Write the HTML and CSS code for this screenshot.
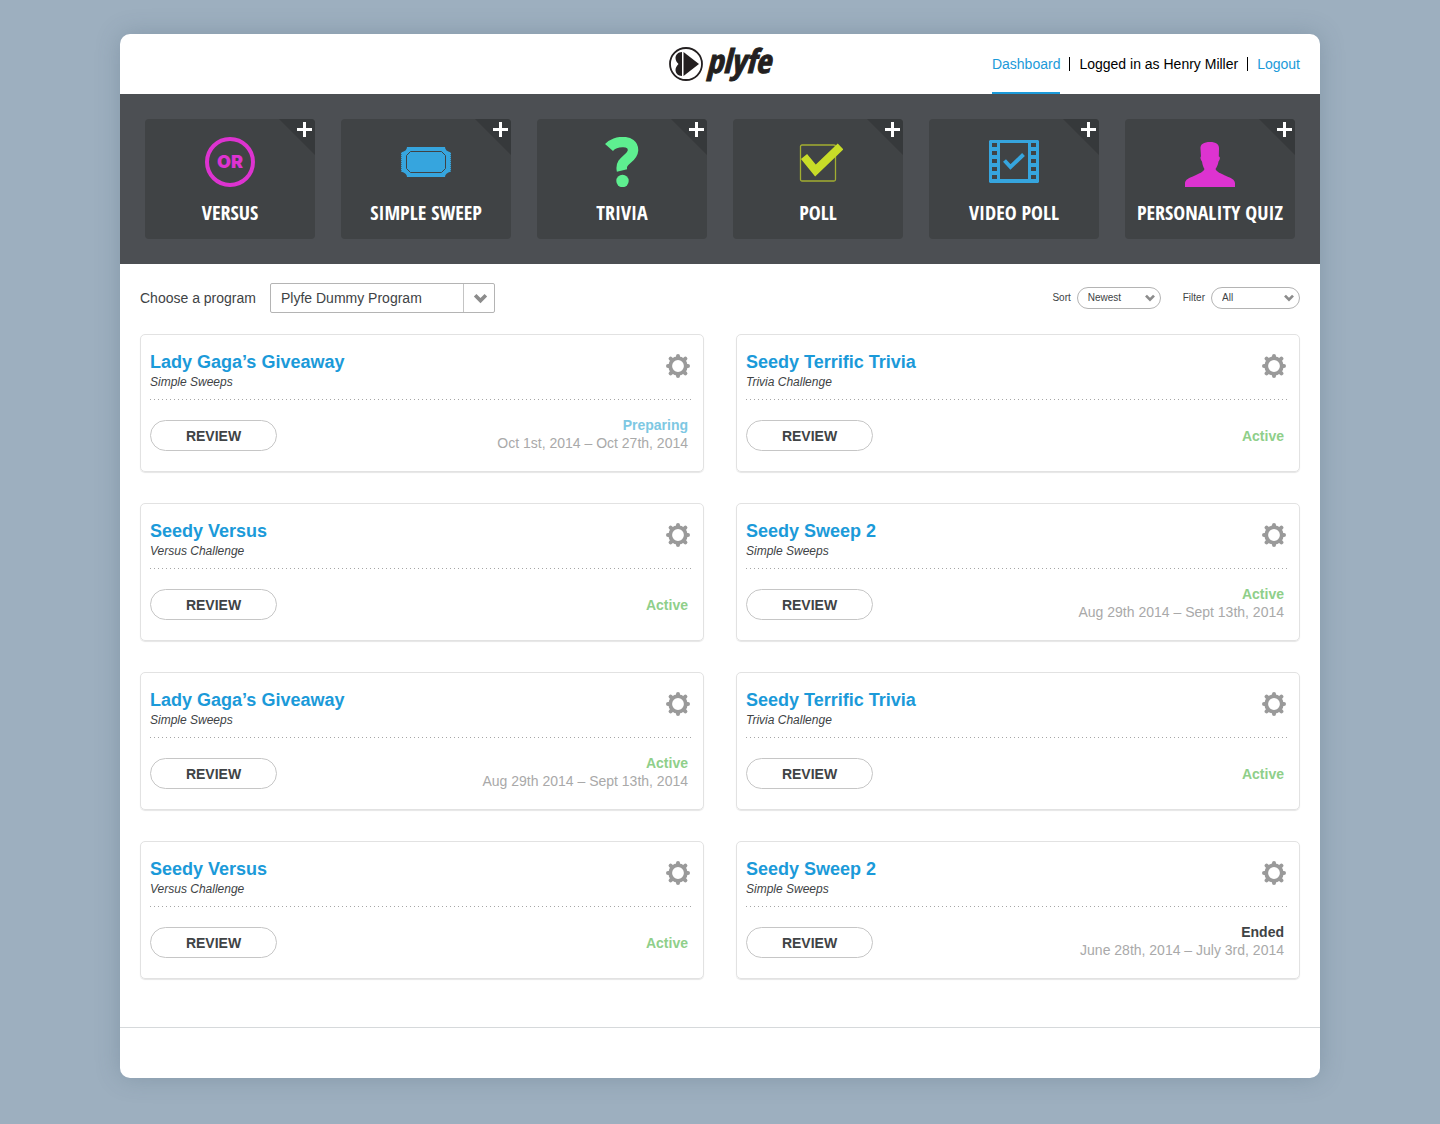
FILE: index.html
```html
<!DOCTYPE html>
<html lang="en">
<head>
<meta charset="utf-8">
<title>Plyfe Dashboard</title>
<meta name="viewport" content="width=device-width, initial-scale=1">
<link rel="stylesheet" href="styles.css">
</head>
<body>
<svg class="sprite" aria-hidden="true">
  <symbol id="corner" viewBox="0 0 36 36">
    <path d="M0 0H36V36Z" fill="#36393b"/>
    <path d="M25.500 3V18M18 10.500H33" stroke="#fff" stroke-width="3"/>
  </symbol>
  <symbol id="chevron" viewBox="0 0 14 10">
    <path d="M2 2L7 7L12 2" fill="none" stroke="#8c8c8c" stroke-width="3.400"/>
  </symbol>
  <symbol id="gear" viewBox="-12 -12 24 24">
    <g fill="none" stroke="#9a9a9a" stroke-linecap="round">
      <circle r="7.800" stroke-width="3.800"/>
      <path d="M0 -8V-10M0 8V10M-8 0H-10M8 0H10" stroke-width="4"/>
      <path d="M6 -6L7.400 -7.400M6 6L7.400 7.400M-6 6L-7.400 7.400M-6 -6L-7.400 -7.400" stroke-width="4"/>
    </g>
  </symbol>
</svg>

<div class="panel">
  <header class="header">
    <a class="logo" href="#" aria-label="plyfe">
      <svg class="logo-mark" viewBox="0 0 34 34" aria-hidden="true">
        <circle cx="17" cy="17" r="16" fill="none" stroke="#231f20" stroke-width="1.800"/>
        <path d="M14.500 5L30 17L14.500 29Z" fill="#231f20"/>
        <path d="M13 5V29C9 29 6.500 26 6.500 23C6.500 20.500 8 18.500 9.500 17C8 15.500 6.500 13.500 6.500 11C6.500 8 9 5 13 5Z" fill="#231f20"/>
      </svg>
      <span class="logo-word">plyfe</span>
    </a>
    <nav class="nav">
      <a class="nav-item nav-link current" href="#">Dashboard</a>
      <span class="nav-item">Logged in as Henry Miller</span>
      <a class="nav-item nav-link" href="#">Logout</a>
    </nav>
  </header>

  <section class="types">
    <button class="tile" type="button">
      <svg class="tile-corner"><use href="#corner"/></svg>
      <svg class="tile-icon" viewBox="0 0 50 50">
        <circle cx="25" cy="25" r="23" fill="none" stroke="#dd33d0" stroke-width="4"/>
        <text class="or" x="25" y="31" text-anchor="middle">OR</text>
      </svg>
      <span class="tile-label">VERSUS</span>
    </button>
    <button class="tile" type="button">
      <svg class="tile-corner"><use href="#corner"/></svg>
      <svg class="tile-icon" viewBox="0 0 50 50">
        <path d="M6 10H44Q44 14 50 15.500V34.500Q44 36 44 40H6Q6 36 0 34.500V15.500Q6 14 6 10Z" fill="#36a5de"/>
        <path d="M9.500 14.500H40.500L44.500 18.500V31.500L40.500 35.500H9.500L5.500 31.500V18.500Z" fill="none" stroke="#404345"/>
        <path d="M0 15V35M50 15V35" stroke="#404345" stroke-dasharray="1 1"/>
      </svg>
      <span class="tile-label">SIMPLE SWEEP</span>
    </button>
    <button class="tile" type="button">
      <svg class="tile-corner"><use href="#corner"/></svg>
      <svg class="tile-icon" viewBox="0 0 50 50">
        <path d="M12 10.500C18 3.500 36.500 2 36 13.500C35.500 22 22.500 23 25 33.500" fill="none" stroke="#5eef90" stroke-width="10.500"/>
        <circle cx="25.500" cy="44" r="6.200" fill="#5eef90"/>
      </svg>
      <span class="tile-label">TRIVIA</span>
    </button>
    <button class="tile" type="button">
      <svg class="tile-corner"><use href="#corner"/></svg>
      <svg class="tile-icon" viewBox="0 0 50 50">
        <rect x="7.500" y="8" width="35" height="36" rx="1.500" fill="none" stroke="#a2ae31" stroke-width="1.300"/>
        <path d="M11 19.500L22.500 33.500L47.500 9.500" fill="none" stroke="#c8dc28" stroke-width="8"/>
      </svg>
      <span class="tile-label">POLL</span>
    </button>
    <button class="tile" type="button">
      <svg class="tile-corner"><use href="#corner"/></svg>
      <svg class="tile-icon" viewBox="0 0 50 50">
        <path fill="#36a5de" fill-rule="evenodd" d="M1 3H49L50 4V45L49 46H1L0 45V4ZM11 6V42H39V6ZM3 6V10H8V6ZM3 14V18H8V14ZM3 22V26H8V22ZM3 30V34H8V30ZM3 38V42H8V38ZM42 6V10H47V6ZM42 14V18H47V14ZM42 22V26H47V22ZM42 30V34H47V30ZM42 38V42H47V38Z"/>
        <path d="M15.500 23.500L21.500 30L34.500 17.500" fill="none" stroke="#36a5de" stroke-width="4"/>
      </svg>
      <span class="tile-label">VIDEO POLL</span>
    </button>
    <button class="tile" type="button">
      <svg class="tile-corner"><use href="#corner"/></svg>
      <svg class="tile-icon" viewBox="0 0 50 50">
        <path fill="#dd33d0" d="M15.500 12C15 7 19 5 25 5C31 5 34.500 7.500 34 12L33.800 19.500C35.500 19.500 35 23 33.500 24.500C33 28 31.500 30.500 30.500 32C31.500 35 36 36.500 40 38.500C46 41 50 42.500 50 46.500V50H0V46.500C0 42.500 4 41 10 38.500C14 36.500 18.500 35 19.500 32C18.500 30.500 17.500 28 17 24.500C15.500 23 15 19.500 16 19.500Z"/>
      </svg>
      <span class="tile-label">PERSONALITY QUIZ</span>
    </button>
  </section>

  <form class="toolbar">
    <label class="field-label" for="program">Choose a program</label>
    <span class="select-box program">
      <select id="program"><option>Plyfe Dummy Program</option></select>
      <svg class="chevron"><use href="#chevron"/></svg>
    </span>
    <span class="refine">
      <label for="sort">Sort</label>
      <span class="select-box pill">
        <select id="sort"><option>Newest</option></select>
        <svg class="chevron"><use href="#chevron"/></svg>
      </span>
    </span>
    <span class="refine">
      <label for="filter">Filter</label>
      <span class="select-box pill">
        <select id="filter"><option>All</option></select>
        <svg class="chevron"><use href="#chevron"/></svg>
      </span>
    </span>
  </form>

  <main class="cards">
    <article class="card">
      <div class="card-head">
        <div><h2><a href="#">Lady Gaga’s Giveaway</a></h2><p class="kind">Simple Sweeps</p></div>
        <button class="gear" type="button" aria-label="Settings"><svg><use href="#gear"/></svg></button>
      </div>
      <div class="card-body">
        <button class="review" type="button">REVIEW</button>
        <div class="state"><strong class="preparing">Preparing</strong><span>Oct 1st, 2014 – Oct 27th, 2014</span></div>
      </div>
    </article>
    <article class="card">
      <div class="card-head">
        <div><h2><a href="#">Seedy Terrific Trivia</a></h2><p class="kind">Trivia Challenge</p></div>
        <button class="gear" type="button" aria-label="Settings"><svg><use href="#gear"/></svg></button>
      </div>
      <div class="card-body">
        <button class="review" type="button">REVIEW</button>
        <div class="state"><strong class="active">Active</strong></div>
      </div>
    </article>
    <article class="card">
      <div class="card-head">
        <div><h2><a href="#">Seedy Versus</a></h2><p class="kind">Versus Challenge</p></div>
        <button class="gear" type="button" aria-label="Settings"><svg><use href="#gear"/></svg></button>
      </div>
      <div class="card-body">
        <button class="review" type="button">REVIEW</button>
        <div class="state"><strong class="active">Active</strong></div>
      </div>
    </article>
    <article class="card">
      <div class="card-head">
        <div><h2><a href="#">Seedy Sweep 2</a></h2><p class="kind">Simple Sweeps</p></div>
        <button class="gear" type="button" aria-label="Settings"><svg><use href="#gear"/></svg></button>
      </div>
      <div class="card-body">
        <button class="review" type="button">REVIEW</button>
        <div class="state"><strong class="active">Active</strong><span>Aug 29th 2014 – Sept 13th, 2014</span></div>
      </div>
    </article>
    <article class="card">
      <div class="card-head">
        <div><h2><a href="#">Lady Gaga’s Giveaway</a></h2><p class="kind">Simple Sweeps</p></div>
        <button class="gear" type="button" aria-label="Settings"><svg><use href="#gear"/></svg></button>
      </div>
      <div class="card-body">
        <button class="review" type="button">REVIEW</button>
        <div class="state"><strong class="active">Active</strong><span>Aug 29th 2014 – Sept 13th, 2014</span></div>
      </div>
    </article>
    <article class="card">
      <div class="card-head">
        <div><h2><a href="#">Seedy Terrific Trivia</a></h2><p class="kind">Trivia Challenge</p></div>
        <button class="gear" type="button" aria-label="Settings"><svg><use href="#gear"/></svg></button>
      </div>
      <div class="card-body">
        <button class="review" type="button">REVIEW</button>
        <div class="state"><strong class="active">Active</strong></div>
      </div>
    </article>
    <article class="card">
      <div class="card-head">
        <div><h2><a href="#">Seedy Versus</a></h2><p class="kind">Versus Challenge</p></div>
        <button class="gear" type="button" aria-label="Settings"><svg><use href="#gear"/></svg></button>
      </div>
      <div class="card-body">
        <button class="review" type="button">REVIEW</button>
        <div class="state"><strong class="active">Active</strong></div>
      </div>
    </article>
    <article class="card">
      <div class="card-head">
        <div><h2><a href="#">Seedy Sweep 2</a></h2><p class="kind">Simple Sweeps</p></div>
        <button class="gear" type="button" aria-label="Settings"><svg><use href="#gear"/></svg></button>
      </div>
      <div class="card-body">
        <button class="review" type="button">REVIEW</button>
        <div class="state"><strong>Ended</strong><span>June 28th, 2014 – July 3rd, 2014</span></div>
      </div>
    </article>
  </main>
  <footer class="footer"></footer>
</div>
</body>
</html>
```
FILE: styles.css
```css
* { box-sizing: border-box; }

body {
  margin: 0;
  padding: 34px 24px 46px;
  background: #9dafbf;
  color: #404345;
  font: 14px/18px "Liberation Sans", Arial, sans-serif;
}

a { color: #1b9ad9; text-decoration: none; }
button, select { font: inherit; color: inherit; cursor: pointer; }
h2, p { margin: 0; }
.sprite { display: none; }

.panel {
  max-width: 1200px;
  margin: 0 auto;
  background: #fff;
  border-radius: 10px;
  box-shadow: 0 0 24px rgba(60, 85, 105, 0.25);
}

/* Header */
.header {
  display: grid;
  grid-template-columns: 1fr auto 1fr;
  height: 60px;
  padding: 0 20px;
}
.logo {
  grid-column: 2;
  display: flex;
  align-items: center;
  gap: 3px;
  color: #231f20;
}
.logo-mark { width: 34px; height: 34px; }
.logo-word {
  padding-bottom: 6px;
  font: italic 700 33px/34px "Open Sans Condensed", "Liberation Sans Narrow", sans-serif;
  -webkit-text-stroke: 1px #231f20;
}
.nav {
  display: flex;
  justify-content: flex-end;
  color: #000;
  white-space: nowrap;
}
.nav-item {
  display: flex;
  align-items: center;
  border-bottom: 2px solid transparent;
  padding-top: 2px;
}
.nav-item.current { border-color: #1b9ad9; }
.nav-item + .nav-item::before {
  content: "";
  width: 1px;
  height: 14px;
  margin: 0 9px;
  background: #000;
}

/* Program types */
.types {
  display: grid;
  grid-template-columns: repeat(6, 1fr);
  gap: 26px;
  padding: 25px;
  background: #4c4f53;
}
.tile {
  position: relative;
  display: flex;
  flex-direction: column;
  align-items: center;
  gap: 14px;
  height: 120px;
  padding: 18px 0 0;
  border: 0;
  border-radius: 4px;
  background: #404345;
  color: #fff;
  overflow: hidden;
}
.tile-corner {
  position: absolute;
  top: 0;
  right: 0;
  width: 36px;
  height: 36px;
}
.tile-icon { width: 50px; height: 50px; }
.tile-label {
  font: 700 20px/24px "Open Sans Condensed", "Liberation Sans Narrow", "Open Sans", sans-serif;
  white-space: nowrap;
}
.or { font: 900 18px "Inter", sans-serif; fill: #dd33d0; }

/* Toolbar */
.toolbar {
  display: flex;
  align-items: center;
  padding: 19px 20px 21px;
}
.field-label { min-width: 120px; margin-right: 10px; }
.select-box { position: relative; display: flex; }
.select-box select {
  width: 100%;
  appearance: none;
  background: #fff;
  border: 1px solid #b4b4b4;
}
.chevron { position: absolute; pointer-events: none; }
.program { width: 225px; margin-right: auto; }
.program select { height: 30px; padding: 0 40px 0 10px; border-radius: 2px; }
.program::after {
  content: "";
  position: absolute;
  top: 1px;
  bottom: 1px;
  right: 31px;
  width: 1px;
  background: #c4c4c4;
}
.program .chevron { right: 7px; top: 10px; width: 15px; height: 11px; }
.refine {
  display: flex;
  align-items: center;
  gap: 6px;
  margin-left: 22px;
  font-size: 10px;
}
.pill { min-width: 84px; }
#filter { width: 89px; }
.pill select { height: 22px; padding: 0 24px 0 10px; border-radius: 11px; }
.pill .chevron { right: 5px; top: 7px; width: 12px; height: 8px; }

/* Cards */
.cards {
  display: grid;
  grid-template-columns: repeat(2, 1fr);
  gap: 31px 32px;
  padding: 0 20px 48px;
}
.card {
  height: 138px;
  padding: 0 11px 0 9px;
  border: 1px solid #e2e2e2;
  border-radius: 5px;
  box-shadow: 0 1px 1px rgba(0, 0, 0, 0.1);
}
.card-head {
  display: flex;
  justify-content: space-between;
  height: 65px;
  padding: 17px 2px 0 0;
  background: repeating-linear-gradient(90deg, #a6a6a6 0 1px, transparent 1px 4px) bottom / 100% 1px no-repeat;
}
h2 { font-size: 18px; line-height: 20px; }
.kind { font-size: 12px; line-height: 20px; font-style: italic; }
.gear { width: 24px; height: 24px; margin-top: 2px; padding: 0; border: 0; background: none; }
.gear svg { display: block; width: 24px; height: 24px; }
.card-body {
  display: flex;
  align-items: center;
  justify-content: space-between;
  height: 71px;
  padding-right: 4px;
}
.review {
  width: 127px;
  height: 31px;
  padding: 0;
  border: 1px solid #c6c6c6;
  border-radius: 16px;
  background: #fff;
  font-weight: 700;
}
.state { display: flex; flex-direction: column; text-align: right; color: #a9a9a9; }
.state span { padding-bottom: 4px; }
.state strong { color: #404345; }
.state .preparing { color: #7ec8e3; }
.state .active { color: #8fcf8a; }

.footer { height: 51px; border-top: 1px solid #d6d9db; }
```
